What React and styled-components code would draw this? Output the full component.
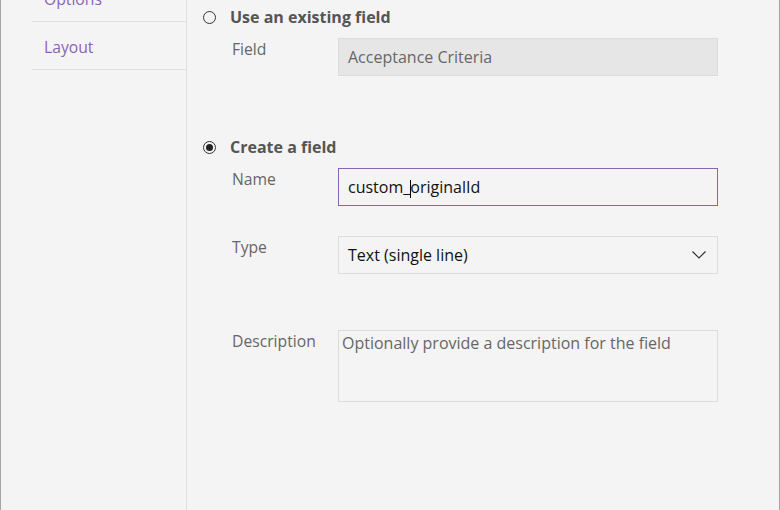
import React from "react";
import styled, { createGlobalStyle } from "styled-components";

const Global = createGlobalStyle`
  html, body { margin: 0; padding: 0; background: #f4f4f4; }
  body { font-family: "Open Sans", "Noto Sans", sans-serif; }
  * { box-sizing: border-box; }
`;

const Frame = styled.div`
  width: 780px;
  height: 510px;
  display: flex;
  background: #f4f4f4;
  border-left: 1px solid #a6a6a6;
  border-right: 1px solid #a6a6a6;
  overflow: hidden;
`;

const Sidebar = styled.nav`
  width: 186px;
  flex: none;
  border-right: 1px solid #e0e0e0;
  padding-left: 31px;
  margin-top: -26px;
`;

const NavItem = styled.div`
  height: 48px;
  padding-left: 12px;
  padding-top: 2px;
  display: flex;
  align-items: center;
  color: #8764b8;
  font-size: 15.7px;
  border-bottom: 1px solid #e0e0e0;
`;

const Main = styled.main`
  flex: 1;
  padding: 5px 0 0 16px;
`;

const Section = styled.section`
  margin-bottom: ${(p) => p.gap || 0}px;
`;

const RadioRow = styled.label`
  display: flex;
  align-items: center;
  gap: 14px;
  height: 24px;
  font-weight: 700;
  font-size: 16px;
  color: #555;
`;

const Radio = styled.span`
  width: 13px;
  height: 13px;
  border-radius: 50%;
  border: 1px solid #333;
  display: flex;
  align-items: center;
  justify-content: center;
  &::after {
    content: "";
    width: 7px;
    height: 7px;
    border-radius: 50%;
    background: #222;
    display: ${(p) => (p.checked ? "block" : "none")};
  }
`;

const FieldRow = styled.div`
  display: flex;
  align-items: flex-start;
  padding-left: 29px;
  margin-top: ${(p) => p.top || 0}px;
`;

const Label = styled.div`
  width: 106px;
  flex: none;
  font-size: 15.7px;
  color: #666;
`;

const Box = styled.div`
  width: 380px;
  height: ${(p) => p.h || 38}px;
  border: 1px solid ${(p) => (p.focus ? "#8764b8" : "#dcdcdc")};
  background: ${(p) => (p.disabled ? "#e6e6e6" : "transparent")};
  display: flex;
  align-items: ${(p) => (p.top ? "flex-start" : "center")};
  justify-content: space-between;
  padding: ${(p) => (p.top ? "1px 3px" : "0 10px 0 9px")};
  font-size: 16px;
  color: ${(p) => (p.disabled ? "#666" : p.muted ? "#666" : "#111")};
`;

const Caret = styled.span`
  display: inline-block;
  width: 1px;
  height: 18px;
  background: #000;
  vertical-align: middle;
  margin: 0 -1px 0 0;
`;

export default function App() {
  return (
    <>
      <Global />
      <Frame>
        <Sidebar>
          <NavItem>Options</NavItem>
          <NavItem>Layout</NavItem>
        </Sidebar>
        <Main>
          <Section gap={59}>
            <RadioRow>
              <Radio />
              Use an existing field
            </RadioRow>
            <FieldRow top={9}>
              <Label>Field</Label>
              <Box disabled>Acceptance Criteria</Box>
            </FieldRow>
          </Section>
          <Section>
            <RadioRow>
              <Radio checked />
              Create a field
            </RadioRow>
            <FieldRow top={9}>
              <Label>Name</Label>
              <Box focus>
                <span>
                  custom_<Caret />originalId
                </span>
              </Box>
            </FieldRow>
            <FieldRow top={30}>
              <Label>Type</Label>
              <Box>
                Text (single line)
                <svg width="14" height="8" viewBox="0 0 14 8" style={{ marginRight: 1 }}>
                  <path d="M0.5 0.5 L7 7 L13.5 0.5" fill="none" stroke="#333" strokeWidth="1.2" />
                </svg>
              </Box>
            </FieldRow>
            <FieldRow top={56}>
              <Label>Description</Label>
              <Box top h={72} muted>
                Optionally provide a description for the field
              </Box>
            </FieldRow>
          </Section>
        </Main>
      </Frame>
    </>
  );
}
